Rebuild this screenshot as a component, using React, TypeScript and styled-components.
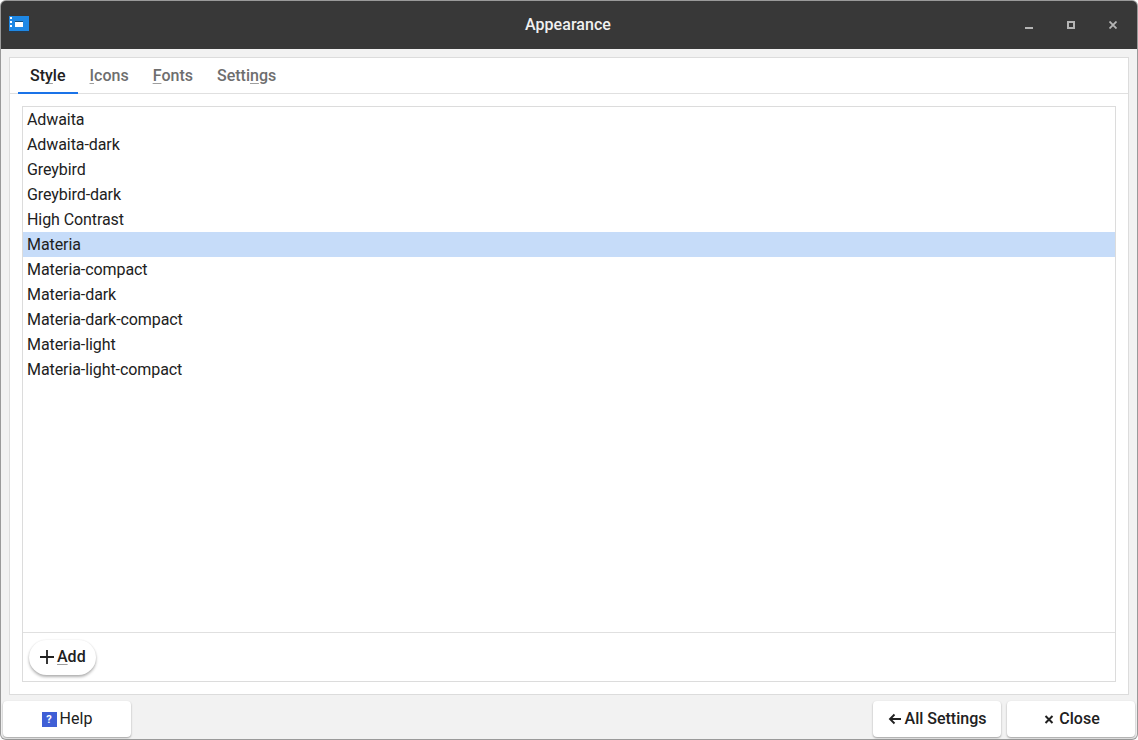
import styled, { createGlobalStyle } from 'styled-components';

const themes = [
  'Adwaita',
  'Adwaita-dark',
  'Greybird',
  'Greybird-dark',
  'High Contrast',
  'Materia',
  'Materia-compact',
  'Materia-dark',
  'Materia-dark-compact',
  'Materia-light',
  'Materia-light-compact',
];

const App = () => {
  return (
    <Window>
      <GlobalStyle />
      <TitleBar>
        <AppIcon width="20" height="18" viewBox="0 0 20 18">
          <rect x="0" y="0" width="20" height="15" fill="#1e88e5" />
          <rect x="0" y="15" width="20" height="2" fill="#2b3a4a" />
          <rect x="1" y="1" width="2" height="2" fill="#fff" />
          <rect x="1" y="5" width="2" height="2" fill="#fff" />
          <rect x="1" y="9" width="2" height="2" fill="#fff" />
          <rect x="6" y="6" width="8" height="5" fill="#fff" />
          <rect x="6" y="5" width="8" height="1" fill="#14507f" />
        </AppIcon>
        <Title>Appearance</Title>
        <WindowControls>
          <ControlIcon width="8" height="8" viewBox="0 0 8 8">
            <rect x="0" y="6" width="8" height="2" fill="#b5b5b5" />
          </ControlIcon>
          <ControlIcon width="8" height="8" viewBox="0 0 8 8">
            <path d="M0 0h8v8H0z M2 2v4h4V2z" fill="#b5b5b5" fillRule="evenodd" />
          </ControlIcon>
          <ControlIcon width="8" height="8" viewBox="0 0 8 8">
            <path d="M0.5 0.5L7.5 7.5M7.5 0.5L0.5 7.5" stroke="#b5b5b5" strokeWidth="1.8" />
          </ControlIcon>
        </WindowControls>
      </TitleBar>

      <Content>
        <Panel>
          <TabBar>
            <Tab $active>
              St<Mnemonic>y</Mnemonic>le
            </Tab>
            <Tab>
              <Mnemonic>I</Mnemonic>cons
            </Tab>
            <Tab>
              <Mnemonic>F</Mnemonic>onts
            </Tab>
            <Tab>
              Setti<Mnemonic>n</Mnemonic>gs
            </Tab>
          </TabBar>

          <PanelBody>
            <ListFrame>
              <ThemeList>
                {themes.map((theme) => (
                  <ThemeRow key={theme} $selected={theme === 'Materia'}>
                    {theme}
                  </ThemeRow>
                ))}
              </ThemeList>
              <ListFooter>
                <AddButton>
                  <svg width="16" height="16" viewBox="0 0 16 16">
                    <path d="M8 1v14M1 8h14" stroke="#212121" strokeWidth="1.8" />
                  </svg>
                  <span>
                    <Mnemonic>A</Mnemonic>dd
                  </span>
                </AddButton>
              </ListFooter>
            </ListFrame>
          </PanelBody>
        </Panel>

        <ButtonRow>
          <ActionButton $light>
            <HelpIcon>?</HelpIcon>
            Help
          </ActionButton>
          <RightButtons>
            <ActionButton>
              <ButtonGlyph width="13" height="12" viewBox="0 0 13 12">
                <path d="M13 6H2M6.5 1.5L2 6l4.5 4.5" fill="none" stroke="#212121" strokeWidth="1.9" />
              </ButtonGlyph>
              All Settings
            </ActionButton>
            <ActionButton>
              <ButtonGlyph width="13" height="12" viewBox="0 0 13 12">
                <path d="M3.5 3l7 7M10.5 3l-7 7" fill="none" stroke="#212121" strokeWidth="2" />
              </ButtonGlyph>
              Close
            </ActionButton>
          </RightButtons>
        </ButtonRow>
      </Content>
    </Window>
  );
};

export default App;

const GlobalStyle = createGlobalStyle`
  html, body {
    margin: 0;
    padding: 0;
    background: #fff;
  }

  * {
    box-sizing: border-box;
  }
`;

const Window = styled.div`
  display: flex;
  flex-direction: column;
  width: 1138px;
  height: 740px;
  padding: 1px;
  font-family: Roboto, 'Liberation Sans', sans-serif;
  font-size: 16px;
  color: #212121;
  background: #9a9a9a;
  border-radius: 6px;
  overflow: hidden;
`;

const TitleBar = styled.div`
  position: relative;
  display: flex;
  flex: none;
  align-items: center;
  justify-content: center;
  height: 48px;
  padding-bottom: 2px;
  background: #383838;
  border-radius: 5px 5px 0 0;
`;

const AppIcon = styled.svg`
  position: absolute;
  left: 8px;
  top: 15px;
`;

const Title = styled.div`
  margin-right: 2px;
  color: #f0f0f0;
  font-weight: 500;
  font-size: 16px;
  letter-spacing: 0.05px;
`;

const WindowControls = styled.div`
  position: absolute;
  right: 20px;
  top: 20px;
  display: flex;
  gap: 34px;
`;

const ControlIcon = styled.svg`
  display: block;
`;

const Content = styled.div`
  display: flex;
  flex: 1;
  flex-direction: column;
  min-height: 0;
  background: #f2f2f2;
  border-radius: 0 0 5px 5px;
`;

const Panel = styled.div`
  display: flex;
  flex: 1;
  flex-direction: column;
  min-height: 0;
  margin: 8px 8px 0 8px;
  background: #fff;
  border: 1px solid #dcdcdc;
`;

const TabBar = styled.div`
  display: flex;
  flex: none;
  height: 36px;
  padding: 0 8px;
  border-bottom: 1px solid #e0e0e0;
`;

const Tab = styled.div<{ $active?: boolean }>`
  display: flex;
  align-items: center;
  height: 36px;
  padding: 0 12px;
  font-weight: 500;
  white-space: pre;
  color: ${(props) => (props.$active ? '#212121' : '#6e6e6e')};
  border-bottom: 2px solid ${(props) => (props.$active ? '#1a73e8' : 'transparent')};
`;

const Mnemonic = styled.span`
  text-decoration: underline;
  text-decoration-color: #9e9e9e;
  text-decoration-skip-ink: none;
  text-underline-offset: 2px;
`;

const PanelBody = styled.div`
  display: flex;
  flex: 1;
  min-height: 0;
  padding: 12px;
`;

const ListFrame = styled.div`
  display: flex;
  flex: 1;
  flex-direction: column;
  border: 1px solid #dcdcdc;
`;

const ThemeList = styled.div`
  flex: 1;
  min-height: 0;
`;

const ThemeRow = styled.div<{ $selected?: boolean }>`
  height: 25px;
  padding: 0 4px;
  line-height: 25px;
  letter-spacing: -0.08px;
  background: ${(props) => (props.$selected ? '#c6dcf9' : 'transparent')};
`;

const ListFooter = styled.div`
  display: flex;
  flex: none;
  align-items: flex-start;
  height: 49px;
  padding: 7px 6px;
  border-top: 1px solid #e0e0e0;
`;

const AddButton = styled.button`
  display: flex;
  align-items: center;
  gap: 2px;
  height: 35px;
  padding: 0 10px 2px 10px;
  font: inherit;
  font-weight: 500;
  color: #212121;
  background: #fff;
  border: none;
  border-radius: 18px;
  box-shadow: 0 2px 3px rgba(0, 0, 0, 0.3), 0 0 2px rgba(0, 0, 0, 0.08);
`;

const ButtonGlyph = styled.svg`
  display: block;
  margin-top: 2px;
`;

const ButtonRow = styled.div`
  display: flex;
  flex: none;
  justify-content: space-between;
  height: 44px;
  padding: 6px 2px 0 2px;
`;

const RightButtons = styled.div`
  display: flex;
  gap: 6px;
`;

const ActionButton = styled.button<{ $light?: boolean }>`
  display: flex;
  align-items: center;
  justify-content: center;
  gap: ${(props) => (props.$light ? 3 : 4)}px;
  width: 128px;
  height: 36px;
  padding: 0 0 2px 0;
  font: inherit;
  font-weight: ${(props) => (props.$light ? 400 : 500)};
  color: #212121;
  background: #fff;
  border: none;
  border-radius: 4px;
  box-shadow: 0 1px 2px rgba(0, 0, 0, 0.35);
`;

const HelpIcon = styled.span`
  display: flex;
  align-items: center;
  justify-content: center;
  width: 15px;
  height: 15px;
  margin-top: 2px;
  font-size: 11px;
  font-weight: 700;
  color: #fff;
  background: #3f5fd6;
`;
